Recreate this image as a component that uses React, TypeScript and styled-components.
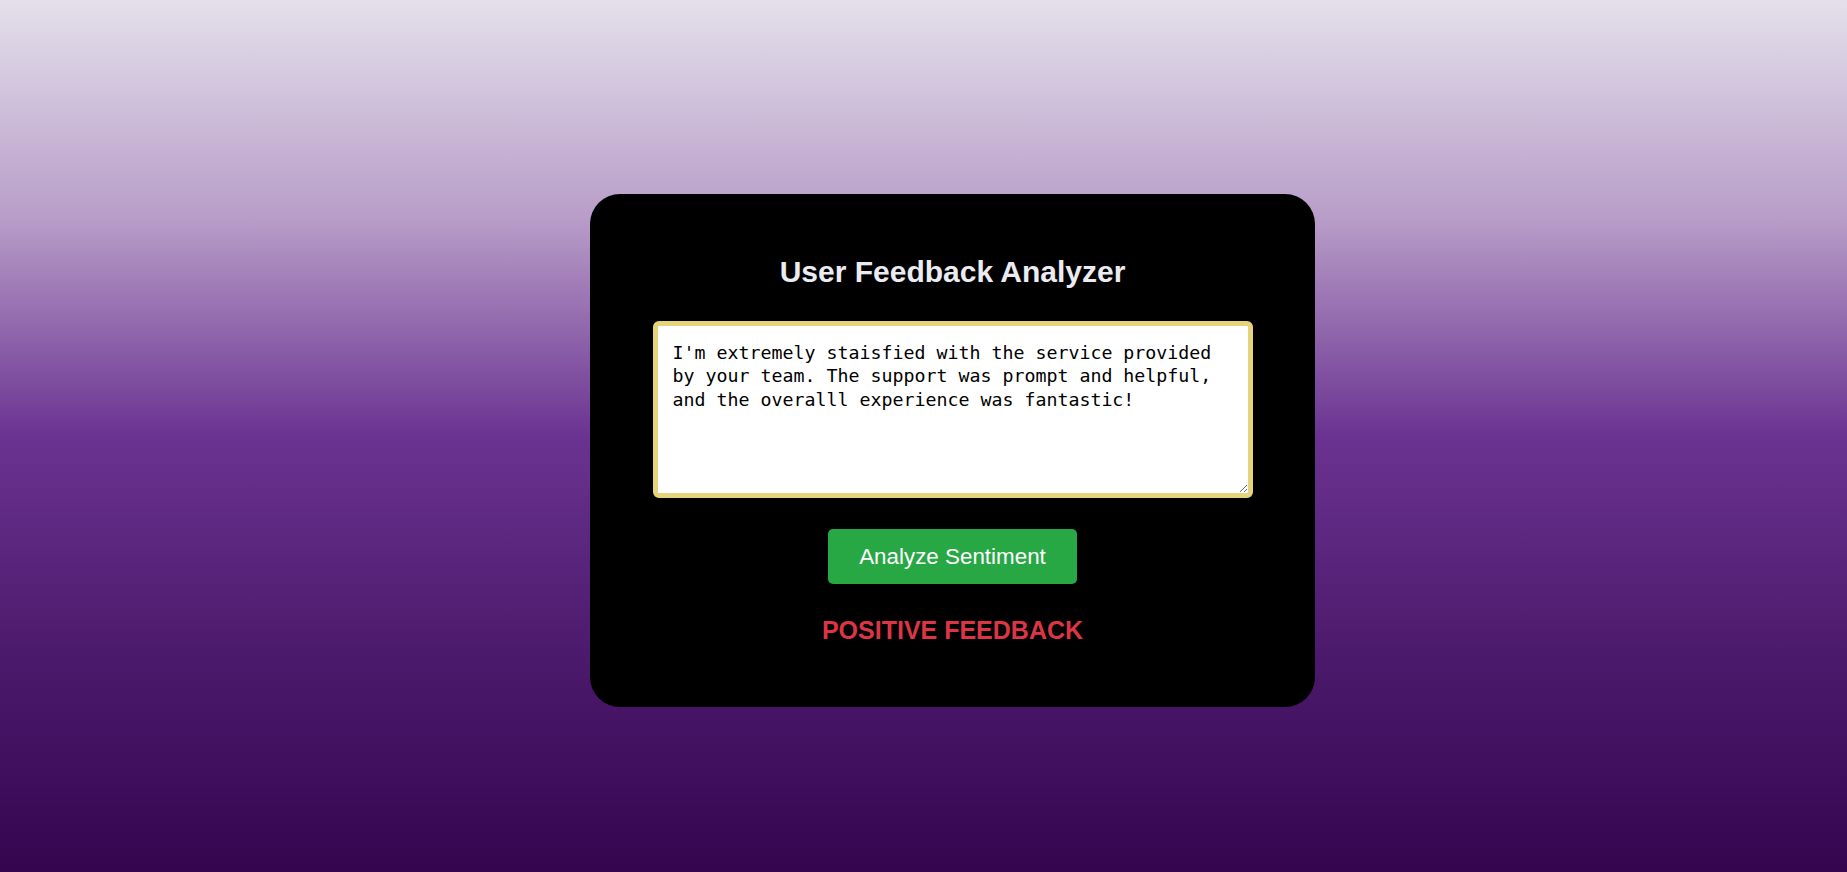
import React, { useState } from 'react';
import styled, { createGlobalStyle } from 'styled-components';

const GlobalStyle = createGlobalStyle`
  html, body {
    margin: 0;
    padding: 0;
    height: 100%;
  }
  body {
    font-family: "Liberation Sans", Arial, sans-serif;
  }
`;

const Page = styled.div`
  box-sizing: border-box;
  min-height: 100vh;
  padding: 29px 0 0 58px;
  display: flex;
  align-items: center;
  justify-content: center;
  background: linear-gradient(to bottom, #e4e0eb 0%, #b89dc8 25%, #6a3391 50%, #4c1a6c 75%, #350550 100%);
`;

const Card = styled.div`
  box-sizing: border-box;
  width: 725px;
  padding: 61px 0 62px;
  background-color: #000;
  border-radius: 30px;
  display: flex;
  flex-direction: column;
  align-items: center;
  gap: 31.5px;
`;

const Title = styled.h2`
  margin: 0;
  font-family: "Liberation Sans", Arial, sans-serif;
  font-size: 30px;
  font-weight: 700;
  line-height: normal;
  color: #ebecf2;
`;

const FeedbackInput = styled.textarea`
  display: block;
  box-sizing: border-box;
  width: 600px;
  height: 177px;
  padding: 15px;
  border: 5px solid #e6d47c;
  border-radius: 6px;
  background: #fff;
  color: #000;
  font-family: "DejaVu Sans Mono", "Liberation Mono", monospace;
  font-size: 18.27px;
  line-height: 23.4px;
  outline: none;
`;

const AnalyzeButton = styled.button`
  box-sizing: border-box;
  height: 55px;
  padding: 0 31.5px;
  border: none;
  border-radius: 5px;
  background-color: #28a745;
  color: #fff;
  font-family: "Liberation Sans", Arial, sans-serif;
  font-size: 22.4px;
  cursor: pointer;
`;

const Result = styled.div<{ $positive: boolean }>`
  font-family: "Liberation Sans", Arial, sans-serif;
  font-size: 25px;
  font-weight: 700;
  line-height: normal;
  color: ${(p) => (p.$positive ? '#dc3545' : '#dc3545')};
`;

const App = () => {
  const [feedback, setFeedback] = useState(
    "I'm extremely staisfied with the service provided by your team. The support was prompt and helpful, and the overalll experience was fantastic!"
  );
  const [result, setResult] = useState('POSITIVE FEEDBACK');

  const handleAnalyze = () => {
    setResult(feedback.trim() ? 'POSITIVE FEEDBACK' : '');
  };

  return (
    <>
      <GlobalStyle />
      <Page>
        <Card>
          <Title>User Feedback Analyzer</Title>
          <FeedbackInput value={feedback} onChange={(e) => setFeedback(e.target.value)} />
          <AnalyzeButton onClick={handleAnalyze}>Analyze Sentiment</AnalyzeButton>
          <Result $positive={result === 'POSITIVE FEEDBACK'}>{result}</Result>
        </Card>
      </Page>
    </>
  );
};

export default App;
